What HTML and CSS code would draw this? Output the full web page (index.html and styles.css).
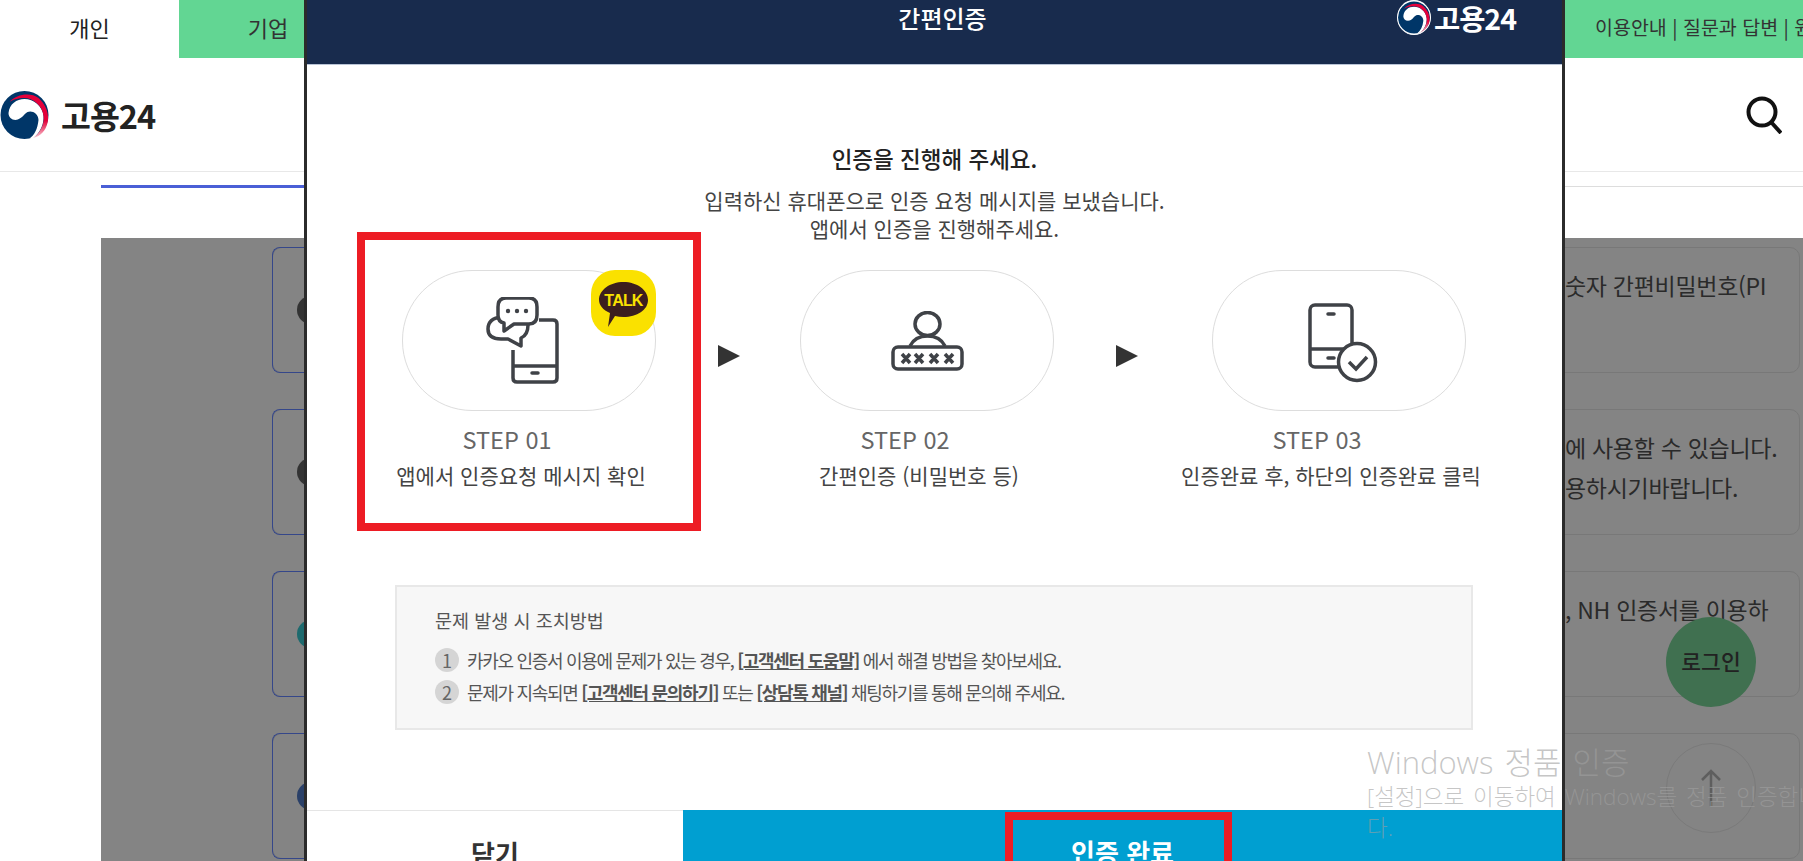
FILE: index.html
```html
<!DOCTYPE html>
<html lang="ko">
<head>
    <meta charset="UTF-8">
    <meta name="viewport" content="width=device-width, initial-scale=1.0">
    <title>고용24 - 간편인증</title>
    <link rel="stylesheet" href="styles.css">
</head>
<body>
    <!-- Shared logo mark -->
    <svg class="defs" width="0" height="0">
        <linearGradient id="mark-red" x1="0" y1="0" x2="0" y2="1">
            <stop offset="0.6" stop-color="#e4003a"/>
            <stop offset="1" stop-color="#f9c6d0"/>
        </linearGradient>
        <symbol id="mark" viewBox="0 0 48 48">
            <circle cx="24" cy="24" r="24" fill="#003668"/>
            <path d="M8 22C9 13 16 8 24 8C33 8 42 15 43 25C43.500 33 40 41 33 47L29 47.500C34 44 37 38 38 29C38 22 31 19 27 21C23 23 22 28 15 29C11 29 8 26 8 22Z" fill="#fff"/>
            <path d="M9 11C16 3 30 1 38 7C46 14 49 24 47 32C45 40 40 45 33 47C41 40 44 32 43 25C42 14 32 7 24 7C17 7 12 9 9 11Z" fill="url(#mark-red)"/>
        </symbol>
    </svg>

    <!-- Page behind the dialog -->
    <div class="topbar">
        <div class="tab tab-active">개인</div>
        <div class="tab">기업</div>
        <div class="top-nav">이용안내 | 질문과 답변 | 원격지원</div>
    </div>

    <header class="site-header">
        <div class="logo">
            <svg class="logo-mark" width="49" height="48"><use href="#mark"/></svg>
            <span class="logo-text">고용24</span>
        </div>
        <svg class="search" width="36" height="38" viewBox="0 0 36 38">
            <circle cx="16" cy="16" r="13.500" fill="none" stroke="#111" stroke-width="4"/>
            <path d="M25 26L35 37" stroke="#111" stroke-width="4"/>
        </svg>
    </header>

    <div class="tabline">
        <div class="tabline-on"></div>
        <div class="tabline-off"></div>
    </div>

    <section class="cert-list">
        <div class="cert-card">
            <span class="cert-dot"></span>
            <p class="cert-text">숫자 간편비밀번호(PI</p>
        </div>
        <div class="cert-card">
            <span class="cert-dot"></span>
            <p class="cert-text">에 사용할 수 있습니다.<br>용하시기바랍니다.</p>
        </div>
        <div class="cert-card">
            <span class="cert-dot dot-teal"></span>
            <p class="cert-text">, NH 인증서를 이용하</p>
        </div>
        <div class="cert-card">
            <span class="cert-dot dot-navy"></span>
            <p class="cert-text"></p>
        </div>
    </section>

    <a class="float-login">로그인</a>
    <a class="float-top">
        <svg width="22" height="38" viewBox="0 0 22 38">
            <path d="M11 2V37M2 11L11 2L20 11" fill="none" stroke="#5e5e5e" stroke-width="2.500"/>
        </svg>
    </a>

    <!-- Dialog -->
    <div class="modal">
        <div class="modal-head">
            <h2 class="modal-title">간편인증</h2>
            <div class="modal-logo">
                <svg class="modal-mark" width="34" height="35"><use href="#mark"/></svg>
                <span>고용24</span>
            </div>
        </div>

        <div class="intro">
            <h3>인증을 진행해 주세요.</h3>
            <p>입력하신 휴대폰으로 인증 요청 메시지를 보냈습니다.<br>앱에서 인증을 진행해주세요.</p>
        </div>

        <div class="steps">
            <div class="step">
                <div class="step-pill">
                    <svg class="icon-chat" width="73" height="87" viewBox="-1 -1 73 87" fill="none" stroke="#3f4247" stroke-width="3.500" stroke-linejoin="round">
                        <path d="M52 22H66Q70 22 70 26V80Q70 84 66 84H30Q26 84 26 80V52"/>
                        <path d="M26 68H70"/>
                        <path d="M45 75H51" stroke-linecap="round"/>
                        <path d="M15 19Q1 20 1 31Q1 41 14 41H21L34 48V40Q41 37 41 27"/>
                        <path d="M19 0H42Q50 0 50 9V17Q50 26 42 26H27L17 33V25Q11 24 11 17V9Q11 0 19 0Z" fill="#fff"/>
                        <circle cx="21" cy="13" r="2.200" fill="#3f4247" stroke="none"/>
                        <circle cx="30" cy="13" r="2.200" fill="#3f4247" stroke="none"/>
                        <circle cx="39" cy="13" r="2.200" fill="#3f4247" stroke="none"/>
                    </svg>
                    <svg class="talk" width="65" height="66" viewBox="0 0 65 66">
                        <rect width="65" height="66" rx="24" fill="#fae100"/>
                        <path d="M32.500 12C46 12 57 20 57 30C57 40 46 47 32.500 47Q28 47 24 46L17 57L19 43C12 40 8 35 8 30C8 20 19 12 32.500 12Z" fill="#3c1e1e"/>
                        <text x="32.500" y="36" class="talk-text">TALK</text>
                    </svg>
                </div>
                <div class="step-label">STEP 01</div>
                <div class="step-desc">앱에서 인증요청 메시지 확인</div>
                <div class="mark-box"></div>
            </div>
            <div class="arrow"></div>
            <div class="step">
                <div class="step-pill">
                    <svg width="73" height="60" viewBox="0 0 73 60" fill="none" stroke="#3f4247" stroke-width="3.500">
                        <ellipse cx="36.500" cy="13" rx="12.500" ry="11.500"/>
                        <path d="M19 35Q24 25 36.500 25Q49 25 54 35"/>
                        <rect x="2" y="36" width="69" height="22" rx="5"/>
                        <path d="M11 43L19 52M19 43L11 52M24 43L32 52M32 43L24 52M39 43L47 52M47 43L39 52M54 43L62 52M62 43L54 52"/>
                    </svg>
                </div>
                <div class="step-label">STEP 02</div>
                <div class="step-desc">간편인증 (비밀번호 등)</div>
            </div>
            <div class="arrow arrow-wide"></div>
            <div class="step">
                <div class="step-pill">
                    <svg class="icon-check" width="70" height="80" viewBox="0 0 70 80" fill="none" stroke="#3f4247" stroke-width="3.500">
                        <rect x="2" y="2" width="42" height="62" rx="5"/>
                        <path d="M2 46H44"/>
                        <path d="M20 11H26M20 55H26" stroke-linecap="round"/>
                        <circle cx="49" cy="59" r="18.500" fill="#fff"/>
                        <path d="M41 59L48 66L59 54"/>
                    </svg>
                </div>
                <div class="step-label">STEP 03</div>
                <div class="step-desc">인증완료 후, 하단의 인증완료 클릭</div>
            </div>
        </div>

        <div class="notice">
            <h4>문제 발생 시 조치방법</h4>
            <p><span class="num">1</span>카카오 인증서 이용에 문제가 있는 경우, <b>[고객센터 도움말]</b> 에서 해결 방법을 찾아보세요.</p>
            <p><span class="num">2</span>문제가 지속되면 <b>[고객센터 문의하기]</b> 또는 <b>[상담톡 채널]</b> 채팅하기를 통해 문의해 주세요.</p>
        </div>

        <div class="modal-foot">
            <button class="btn-close">닫기</button>
            <button class="btn-done">인증 완료<span class="mark-foot"></span></button>
        </div>
    </div>

    <!-- OS watermark -->
    <div class="watermark">
        <div class="wm-title">Windows 정품 인증</div>
        <div class="wm-sub">[설정]으로 이동하여 Windows를 정품 인증합니<br>다.</div>
    </div>
</body>
</html>
```

FILE: styles.css
```css
* {
    box-sizing: border-box;
}

html, body {
    margin: 0;
    height: 861px;
    overflow: hidden;
}

body {
    position: relative;
    font-family: "Noto Sans CJK KR", "Noto Sans", sans-serif;
    background-color: #fff;
    color: #333;
}

.defs {
    position: absolute;
}

/* Page behind the dialog */
.topbar {
    display: flex;
    height: 58px;
    background-color: #62d693;
}

.tab {
    width: 178px;
    font-size: 22px;
    line-height: 55px;
    text-align: center;
}

.tab-active {
    width: 179px;
    background-color: #fff;
    color: #222;
}

.top-nav {
    width: 208px;
    margin-left: auto;
    font-size: 19.500px;
    line-height: 54px;
    white-space: nowrap;
    overflow: hidden;
}

.site-header {
    display: flex;
    justify-content: space-between;
    align-items: center;
    height: 114px;
    padding-right: 21px;
    border-bottom: 1px solid #e8e8e8;
}

.logo {
    display: flex;
    align-items: center;
    gap: 12px;
}

.logo-text {
    font-size: 32.500px;
    font-weight: 700;
    letter-spacing: -1px;
    color: #222;
}

.tabline {
    display: flex;
    align-items: center;
    height: 3px;
    margin: 13px 0 0 101px;
}

.tabline-on {
    width: 300px;
    height: 3px;
    background-color: #4a5fd6;
}

.tabline-off {
    flex: 1;
    height: 1px;
    background-color: #ddd;
}

.cert-list {
    display: flex;
    flex-direction: column;
    gap: 36px;
    height: 623px;
    margin: 50px 0 0 101px;
    padding: 9px 3px 0 171px;
    background-color: #848484;
}

.cert-card {
    position: relative;
    display: flex;
    align-items: flex-start;
    flex-shrink: 0;
    height: 126px;
    padding: 17px 0 0 24px;
    border: 1px solid #787878;
    border-radius: 10px;
}

.cert-card::before {
    content: "";
    position: absolute;
    left: -1px;
    top: -1px;
    bottom: -1px;
    width: 60px;
    border: 1px solid #35478a;
    border-right: none;
    border-radius: 8px 0 0 8px;
}

.cert-dot {
    width: 28px;
    height: 28px;
    margin-top: 31px;
    border-radius: 50%;
    background-color: #333;
}

.dot-teal {
    background-color: #1d6a6e;
}

.dot-navy {
    background-color: #2a4068;
}

.cert-text {
    width: 234px;
    margin: 0 0 0 auto;
    font-size: 23px;
    line-height: 40px;
    white-space: nowrap;
    letter-spacing: -0.3px;
    color: #2a2a2a;
}

.float-login {
    position: absolute;
    left: 1666px;
    top: 617px;
    width: 90px;
    height: 90px;
    border-radius: 50%;
    background-color: #407050;
    font-size: 21.500px;
    font-weight: 500;
    line-height: 88px;
    text-align: center;
    color: #222;
}

.float-top {
    position: absolute;
    left: 1666px;
    top: 743px;
    display: flex;
    justify-content: center;
    width: 90px;
    height: 90px;
    padding-top: 25px;
    border: 1px solid #7a7a7a;
    border-radius: 50%;
}

/* Dialog */
.modal {
    position: absolute;
    left: 304px;
    top: 0;
    display: flex;
    flex-direction: column;
    width: 1261px;
    height: 861px;
    border-left: 3px solid #2b2b2b;
    border-right: 3px solid #2b2b2b;
    background-color: #fff;
    overflow: hidden;
}

.modal-head {
    display: grid;
    grid-template-columns: 1fr auto 1fr;
    flex-shrink: 0;
    height: 65px;
    border-bottom: 1px solid #b9c4d6;
    background-color: #182b4d;
}

.modal-title {
    grid-column: 2;
    margin: 0;
    padding-left: 16px;
    font-size: 24px;
    font-weight: 500;
    line-height: 36px;
    color: #fff;
}

.modal-logo {
    display: flex;
    align-items: center;
    gap: 3px;
    justify-self: end;
    height: 35px;
    margin-right: 46px;
    font-size: 28.500px;
    font-weight: 700;
    letter-spacing: -1px;
    color: #fff;
}

.modal-mark {
    border: 1px solid #fff;
    border-radius: 50%;
    background-color: #fff;
}

.intro {
    padding-top: 80px;
    text-align: center;
}

.intro h3 {
    margin: 0;
    font-size: 22.500px;
    font-weight: 500;
    line-height: 26px;
    color: #222;
}

.intro p {
    margin: 15px 0 0;
    font-size: 21px;
    line-height: 28px;
    color: #444;
}

.steps {
    display: flex;
    margin: 28px 0 0 95px;
}

.step {
    position: relative;
    flex-shrink: 0;
    width: 254px;
}

.step-pill {
    position: relative;
    display: flex;
    justify-content: center;
    align-items: center;
    height: 141px;
    border: 1px solid #ddd;
    border-radius: 70px;
}

.icon-chat {
    margin-right: 14px;
}

.icon-check {
    margin: 4px 0 0 7px;
}

.talk {
    position: absolute;
    right: -1px;
    top: -1px;
}

.talk-text {
    font-family: "Liberation Sans", sans-serif;
    font-size: 16px;
    font-weight: 700;
    letter-spacing: -0.8px;
    text-anchor: middle;
    fill: #fae100;
}

.step-label {
    margin-top: 13px;
    padding-right: 44px;
    font-size: 23.500px;
    line-height: 30px;
    text-align: center;
    color: #666;
}

.step-desc {
    display: flex;
    justify-content: center;
    margin-top: 6px;
    padding-right: 16px;
    font-size: 21px;
    line-height: 30px;
    white-space: nowrap;
    color: #444;
}

.mark-box {
    position: absolute;
    left: -45px;
    top: -38px;
    width: 344px;
    height: 299px;
    border: 8px solid #ed1c24;
}

.arrow {
    flex-shrink: 0;
    width: 0;
    height: 0;
    margin: 75px 60px 0 62px;
    border-top: 11.500px solid transparent;
    border-bottom: 11.500px solid transparent;
    border-left: 22px solid #333;
}

.arrow-wide {
    margin-right: 74px;
}

.notice {
    width: 1078px;
    height: 145px;
    margin: 95px 0 0 88px;
    padding: 21px 38px 0;
    border: 2px solid #e8e8e8;
    background-color: #f7f7f7;
    color: #555;
}

.notice h4 {
    margin: 0 0 12px;
    font-size: 18.500px;
    font-weight: 400;
    line-height: 24px;
}

.notice p {
    display: flex;
    align-items: center;
    margin: 0;
    font-size: 18px;
    line-height: 32px;
    letter-spacing: -1.300px;
    white-space: pre-wrap;
}

.notice b {
    font-weight: 700;
    text-decoration: underline;
}

.num {
    width: 24px;
    height: 24px;
    margin-right: 8px;
    border-radius: 50%;
    background-color: #d5d5d5;
    line-height: 24px;
    letter-spacing: 0;
    text-align: center;
    color: #666;
}

.modal-foot {
    display: flex;
    flex-shrink: 0;
    height: 51px;
    margin-top: auto;
}

.modal-foot button {
    position: relative;
    padding: 26px 0 0;
    border: none;
    font-family: inherit;
    font-size: 26px;
    font-weight: 700;
    line-height: 32px;
    overflow: hidden;
}

.btn-close {
    width: 376px;
    border-top: 1px solid #e5e5e5 !important;
    background-color: #fff;
    color: #333;
}

.btn-done {
    flex: 1;
    background-color: #009fd1;
    color: #fff;
}

.mark-foot {
    position: absolute;
    left: 322px;
    top: 2px;
    width: 227px;
    height: 70px;
    border: 8px solid #ed1c24;
}

/* OS watermark */
.watermark {
    position: absolute;
    left: 1367px;
    top: 743px;
    width: 436px;
    font-family: "Open Sans", "Noto Sans CJK KR", sans-serif;
    font-weight: 300;
    white-space: nowrap;
    color: rgba(160, 160, 160, 0.6);
}

.wm-title {
    font-size: 31px;
    line-height: 38px;
    word-spacing: 3px;
}

.wm-sub {
    font-size: 22.500px;
    line-height: 31px;
    word-spacing: 3px;
}
```
